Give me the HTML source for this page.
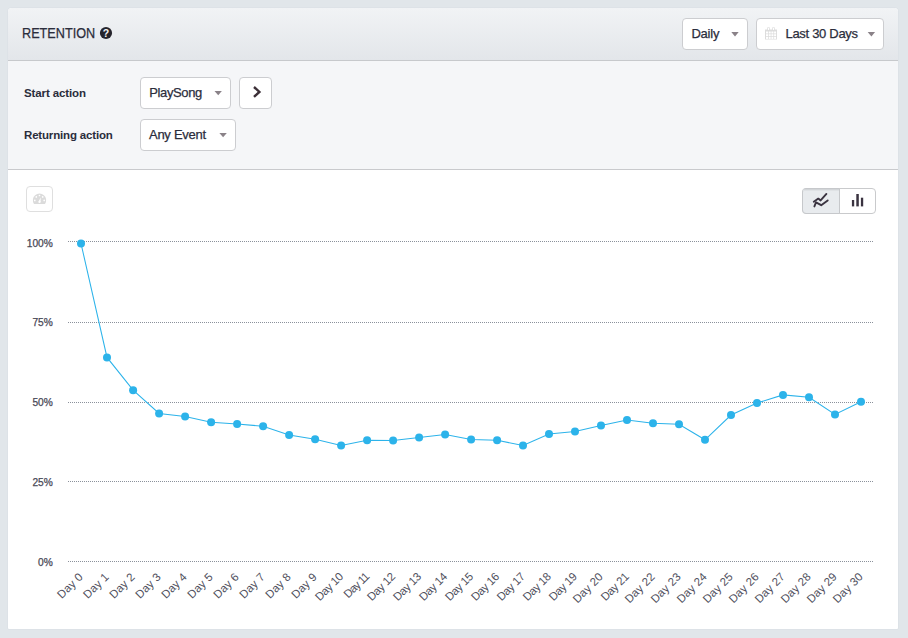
<!DOCTYPE html>
<html><head><meta charset="utf-8"><title>Retention</title>
<style>
html,body{margin:0;padding:0;}
body{width:908px;height:638px;background:#e1e6ea;font-family:"Liberation Sans",sans-serif;color:#2b2d3c;position:relative;overflow:hidden;}
.card{position:absolute;left:8px;top:8px;width:890px;height:621px;background:#fff;border-radius:3.5px 3.5px 1px 1px;overflow:hidden;box-shadow:0 0 1.5px rgba(40,60,80,0.09);}
.hdr{position:absolute;left:0;top:0;width:890px;height:52px;background:linear-gradient(#f1f3f5,#e3e6ea);border-bottom:1px solid #c7c9cc;}
.title{position:absolute;left:22.2px;top:24px;font-size:14px;line-height:18px;transform-origin:0 0;transform:scaleX(0.905);white-space:nowrap;-webkit-text-stroke:0.25px #2b2d3c;}
.filters{position:absolute;left:0;top:53px;width:890px;height:108px;background:#f5f6f8;border-bottom:1px solid #c9cacd;}
.lbl{position:absolute;left:24px;font-size:11.5px;font-weight:bold;line-height:16px;white-space:nowrap;}
.btn{position:absolute;box-sizing:border-box;background:#fff;border:1px solid #cccdd0;border-radius:4px;font-size:13px;line-height:16px;height:32px;}
.btn span{position:absolute;top:7px;white-space:nowrap;-webkit-text-stroke:0.25px #2b2d3c;}
svg{position:absolute;left:0;top:0;}
</style></head><body>
<div class="card">
  <div class="hdr"></div>
  <div class="filters"></div>
</div>
<div class="title">RETENTION</div>
<div class="btn" style="left:682px;top:18px;width:66px;"><span style="left:8.4px;letter-spacing:-0.22px;">Daily</span></div>
<div class="btn" style="left:756px;top:18px;width:128px;"><span style="left:28.5px;letter-spacing:-0.3px;">Last 30 Days</span></div>
<div class="lbl" style="top:85px;letter-spacing:-0.12px;">Start action</div>
<div class="lbl" style="top:127px;letter-spacing:-0.17px;">Returning action</div>
<div class="btn" style="left:140px;top:77px;width:91px;"><span style="left:8.2px;letter-spacing:-0.36px;">PlaySong</span></div>
<div class="btn" style="left:239px;top:77px;width:33px;"></div>
<div class="btn" style="left:140px;top:119px;width:96px;"><span style="left:8px;letter-spacing:-0.27px;">Any Event</span></div>
<svg width="908" height="638" viewBox="0 0 908 638" font-family="Liberation Sans, sans-serif">
  <!-- help icon -->
  <circle cx="106" cy="33" r="6.100" fill="#25242c"/>
  <text x="106" y="36.800" text-anchor="middle" font-size="10.500" font-weight="bold" fill="#f4f5f6">?</text>
  <!-- carets -->
  <g fill="#8a8288"><path d="M214.5 91h7.4l-3.7 4.3z"/><path d="M219.4 133h7.4l-3.7 4.3z"/><path d="M731.3 32.1h7.4l-3.7 4.3z"/><path d="M867.7 32.1h7.4l-3.7 4.3z"/></g>
  <!-- chevron -->
  <path d="M254 87L259.400 91.900L254 96.800" fill="none" stroke="#3d3038" stroke-width="2.400" stroke-linejoin="miter"/>
  <!-- calendar -->
  <g fill="#dcdcdc">
    <path d="M765 29.500h12v10h-12z"/>
    <rect x="767.300" y="27" width="2.400" height="4" rx="1"/>
    <rect x="772.300" y="27" width="2.400" height="4" rx="1"/>
  </g>
  <g fill="#fff">
    <rect x="766" y="31.500" width="2" height="2"/><rect x="768.700" y="31.500" width="2" height="2"/><rect x="771.400" y="31.500" width="2" height="2"/><rect x="774.100" y="31.500" width="2" height="2"/>
    <rect x="766" y="34.200" width="2" height="2"/><rect x="768.700" y="34.200" width="2" height="2"/><rect x="771.400" y="34.200" width="2" height="2"/><rect x="774.100" y="34.200" width="2" height="2"/>
    <rect x="766" y="36.900" width="2" height="2"/><rect x="768.700" y="36.900" width="2" height="2"/><rect x="771.400" y="36.900" width="2" height="2"/><rect x="774.100" y="36.900" width="2" height="2"/>
    <rect x="768" y="27.600" width="1" height="2.400"/><rect x="773" y="27.600" width="1" height="2.400"/>
  </g>
  <!-- grid -->
  <g stroke="#8b919b" stroke-width="1" stroke-dasharray="1,1" fill="none" shape-rendering="crispEdges">
<line x1="68" x2="874" y1="241.5" y2="241.5"/>
<line x1="68" x2="874" y1="322.5" y2="322.5"/>
<line x1="68" x2="874" y1="402.5" y2="402.5"/>
<line x1="68" x2="874" y1="481.5" y2="481.5"/>
<line x1="68" x2="874" y1="561.5" y2="561.5"/>
  </g>
  <g font-size="10.2" fill="#484856" stroke="#484856" stroke-width="0.250">
<text x="52.8" y="246.8" text-anchor="end">100%</text>
<text x="52.8" y="326" text-anchor="end">75%</text>
<text x="52.8" y="406" text-anchor="end">50%</text>
<text x="52.8" y="486" text-anchor="end">25%</text>
<text x="52.8" y="566" text-anchor="end">0%</text>
  </g>
  <g font-size="11.500" fill="#50505d">
<text transform="translate(83.6,577.5) rotate(-45)" text-anchor="end" letter-spacing="0.15">Day 0</text>
<text transform="translate(109.6,577.5) rotate(-45)" text-anchor="end" letter-spacing="0.15">Day 1</text>
<text transform="translate(135.7,577.5) rotate(-45)" text-anchor="end" letter-spacing="0.15">Day 2</text>
<text transform="translate(161.7,577.5) rotate(-45)" text-anchor="end" letter-spacing="0.15">Day 3</text>
<text transform="translate(187.7,577.5) rotate(-45)" text-anchor="end" letter-spacing="0.15">Day 4</text>
<text transform="translate(213.7,577.5) rotate(-45)" text-anchor="end" letter-spacing="0.15">Day 5</text>
<text transform="translate(239.7,577.5) rotate(-45)" text-anchor="end" letter-spacing="0.15">Day 6</text>
<text transform="translate(265.7,577.5) rotate(-45)" text-anchor="end" letter-spacing="0.15">Day 7</text>
<text transform="translate(291.7,577.5) rotate(-45)" text-anchor="end" letter-spacing="0.15">Day 8</text>
<text transform="translate(317.7,577.5) rotate(-45)" text-anchor="end" letter-spacing="0.15">Day 9</text>
<text transform="translate(343.7,577.5) rotate(-45)" text-anchor="end" letter-spacing="-0.40">Day 10</text>
<text transform="translate(369.7,577.5) rotate(-45)" text-anchor="end" letter-spacing="-0.90">Day 11</text>
<text transform="translate(395.7,577.5) rotate(-45)" text-anchor="end" letter-spacing="-0.40">Day 12</text>
<text transform="translate(421.7,577.5) rotate(-45)" text-anchor="end" letter-spacing="-0.40">Day 13</text>
<text transform="translate(447.7,577.5) rotate(-45)" text-anchor="end" letter-spacing="-0.40">Day 14</text>
<text transform="translate(473.7,577.5) rotate(-45)" text-anchor="end" letter-spacing="-0.40">Day 15</text>
<text transform="translate(499.7,577.5) rotate(-45)" text-anchor="end" letter-spacing="-0.40">Day 16</text>
<text transform="translate(525.6,577.5) rotate(-45)" text-anchor="end" letter-spacing="-0.40">Day 17</text>
<text transform="translate(551.6,577.5) rotate(-45)" text-anchor="end" letter-spacing="-0.40">Day 18</text>
<text transform="translate(577.6,577.5) rotate(-45)" text-anchor="end" letter-spacing="-0.40">Day 19</text>
<text transform="translate(603.6,577.5) rotate(-45)" text-anchor="end" letter-spacing="0.10">Day 20</text>
<text transform="translate(629.6,577.5) rotate(-45)" text-anchor="end" letter-spacing="-0.40">Day 21</text>
<text transform="translate(655.6,577.5) rotate(-45)" text-anchor="end" letter-spacing="0.10">Day 22</text>
<text transform="translate(681.6,577.5) rotate(-45)" text-anchor="end" letter-spacing="0.10">Day 23</text>
<text transform="translate(707.6,577.5) rotate(-45)" text-anchor="end" letter-spacing="0.10">Day 24</text>
<text transform="translate(733.6,577.5) rotate(-45)" text-anchor="end" letter-spacing="0.10">Day 25</text>
<text transform="translate(759.6,577.5) rotate(-45)" text-anchor="end" letter-spacing="0.10">Day 26</text>
<text transform="translate(785.6,577.5) rotate(-45)" text-anchor="end" letter-spacing="0.10">Day 27</text>
<text transform="translate(811.6,577.5) rotate(-45)" text-anchor="end" letter-spacing="0.10">Day 28</text>
<text transform="translate(837.6,577.5) rotate(-45)" text-anchor="end" letter-spacing="0.10">Day 29</text>
<text transform="translate(863.6,577.5) rotate(-45)" text-anchor="end" letter-spacing="0.10">Day 30</text>
  </g>
  <polyline points="81.0,243.5 107.0,357.4 133.1,390.2 159.1,413.4 185.1,416.5 211.1,422.2 237.1,424.0 263.1,426.2 289.1,434.9 315.1,439.2 341.1,445.4 367.1,440.2 393.1,440.5 419.1,437.6 445.1,434.6 471.1,439.6 497.1,440.2 523.0,445.5 549.0,433.9 575.0,431.6 601.0,425.6 627.0,420.0 653.0,423.3 679.0,424.3 705.0,439.8 731.0,415.0 757.0,403.1 783.0,394.9 809.0,397.2 835.0,414.4 861.0,401.8" fill="none" stroke="#2cb3ea" stroke-width="1.050"/>
  <g fill="#2cb3ea">
<circle cx="81.0" cy="243.5" r="4"/>
<circle cx="107.0" cy="357.4" r="4"/>
<circle cx="133.1" cy="390.2" r="4"/>
<circle cx="159.1" cy="413.4" r="4"/>
<circle cx="185.1" cy="416.5" r="4"/>
<circle cx="211.1" cy="422.2" r="4"/>
<circle cx="237.1" cy="424.0" r="4"/>
<circle cx="263.1" cy="426.2" r="4"/>
<circle cx="289.1" cy="434.9" r="4"/>
<circle cx="315.1" cy="439.2" r="4"/>
<circle cx="341.1" cy="445.4" r="4"/>
<circle cx="367.1" cy="440.2" r="4"/>
<circle cx="393.1" cy="440.5" r="4"/>
<circle cx="419.1" cy="437.6" r="4"/>
<circle cx="445.1" cy="434.6" r="4"/>
<circle cx="471.1" cy="439.6" r="4"/>
<circle cx="497.1" cy="440.2" r="4"/>
<circle cx="523.0" cy="445.5" r="4"/>
<circle cx="549.0" cy="433.9" r="4"/>
<circle cx="575.0" cy="431.6" r="4"/>
<circle cx="601.0" cy="425.6" r="4"/>
<circle cx="627.0" cy="420.0" r="4"/>
<circle cx="653.0" cy="423.3" r="4"/>
<circle cx="679.0" cy="424.3" r="4"/>
<circle cx="705.0" cy="439.8" r="4"/>
<circle cx="731.0" cy="415.0" r="4"/>
<circle cx="757.0" cy="403.1" r="4"/>
<circle cx="783.0" cy="394.9" r="4"/>
<circle cx="809.0" cy="397.2" r="4"/>
<circle cx="835.0" cy="414.4" r="4"/>
<circle cx="861.0" cy="401.8" r="4"/>
  </g>
  <!-- gauge button -->
  <rect x="26.500" y="186.500" width="26" height="25" rx="3.500" fill="#fff" stroke="#dfdfdf"/>
  <path d="M34 203.900a6.650 6.650 0 1 1 11 0z" fill="#dbdbdb"/>
  <g fill="#fff"><circle cx="34.800" cy="200.400" r="0.850"/><circle cx="36.300" cy="196.900" r="0.850"/><circle cx="39.500" cy="195.500" r="0.850"/><circle cx="42.700" cy="196.900" r="0.850"/><circle cx="44.200" cy="200.400" r="0.850"/><circle cx="39.500" cy="201.900" r="1.150"/><path d="M38.700 201.300L40.800 197.400L40.500 202z"/></g>
  <!-- toggle -->
  <rect x="802.500" y="188.500" width="73" height="25" rx="3.500" fill="#fff" stroke="#c9cacc"/>
  <path d="M806 188.500h33.500v25H806a3.500 3.500 0 0 1-3.500-3.500v-18a3.500 3.500 0 0 1 3.500-3.500z" fill="#e8ebee" stroke="#c6c8cb"/>
  <rect x="803" y="189" width="36" height="1" fill="#d2d5d8"/><rect x="803" y="190" width="36" height="1" fill="#dfe2e5"/>
  <g fill="none" stroke="#3a3340" stroke-width="1.900" stroke-linecap="round" stroke-linejoin="round">
    <path d="M813.800 201.800L818.300 198.600L820.600 200.400L826.400 193.900"/>
    <path d="M814.400 206.400L816 202.300L821.200 205.200L827.700 200.400"/>
  </g>
  <g fill="#3a3340">
    <rect x="851.900" y="200" width="2.300" height="6.400"/><rect x="856.300" y="194" width="2.500" height="12.400"/><rect x="860.900" y="197.700" width="2.300" height="8.700"/>
  </g>
</svg>
</body></html>
